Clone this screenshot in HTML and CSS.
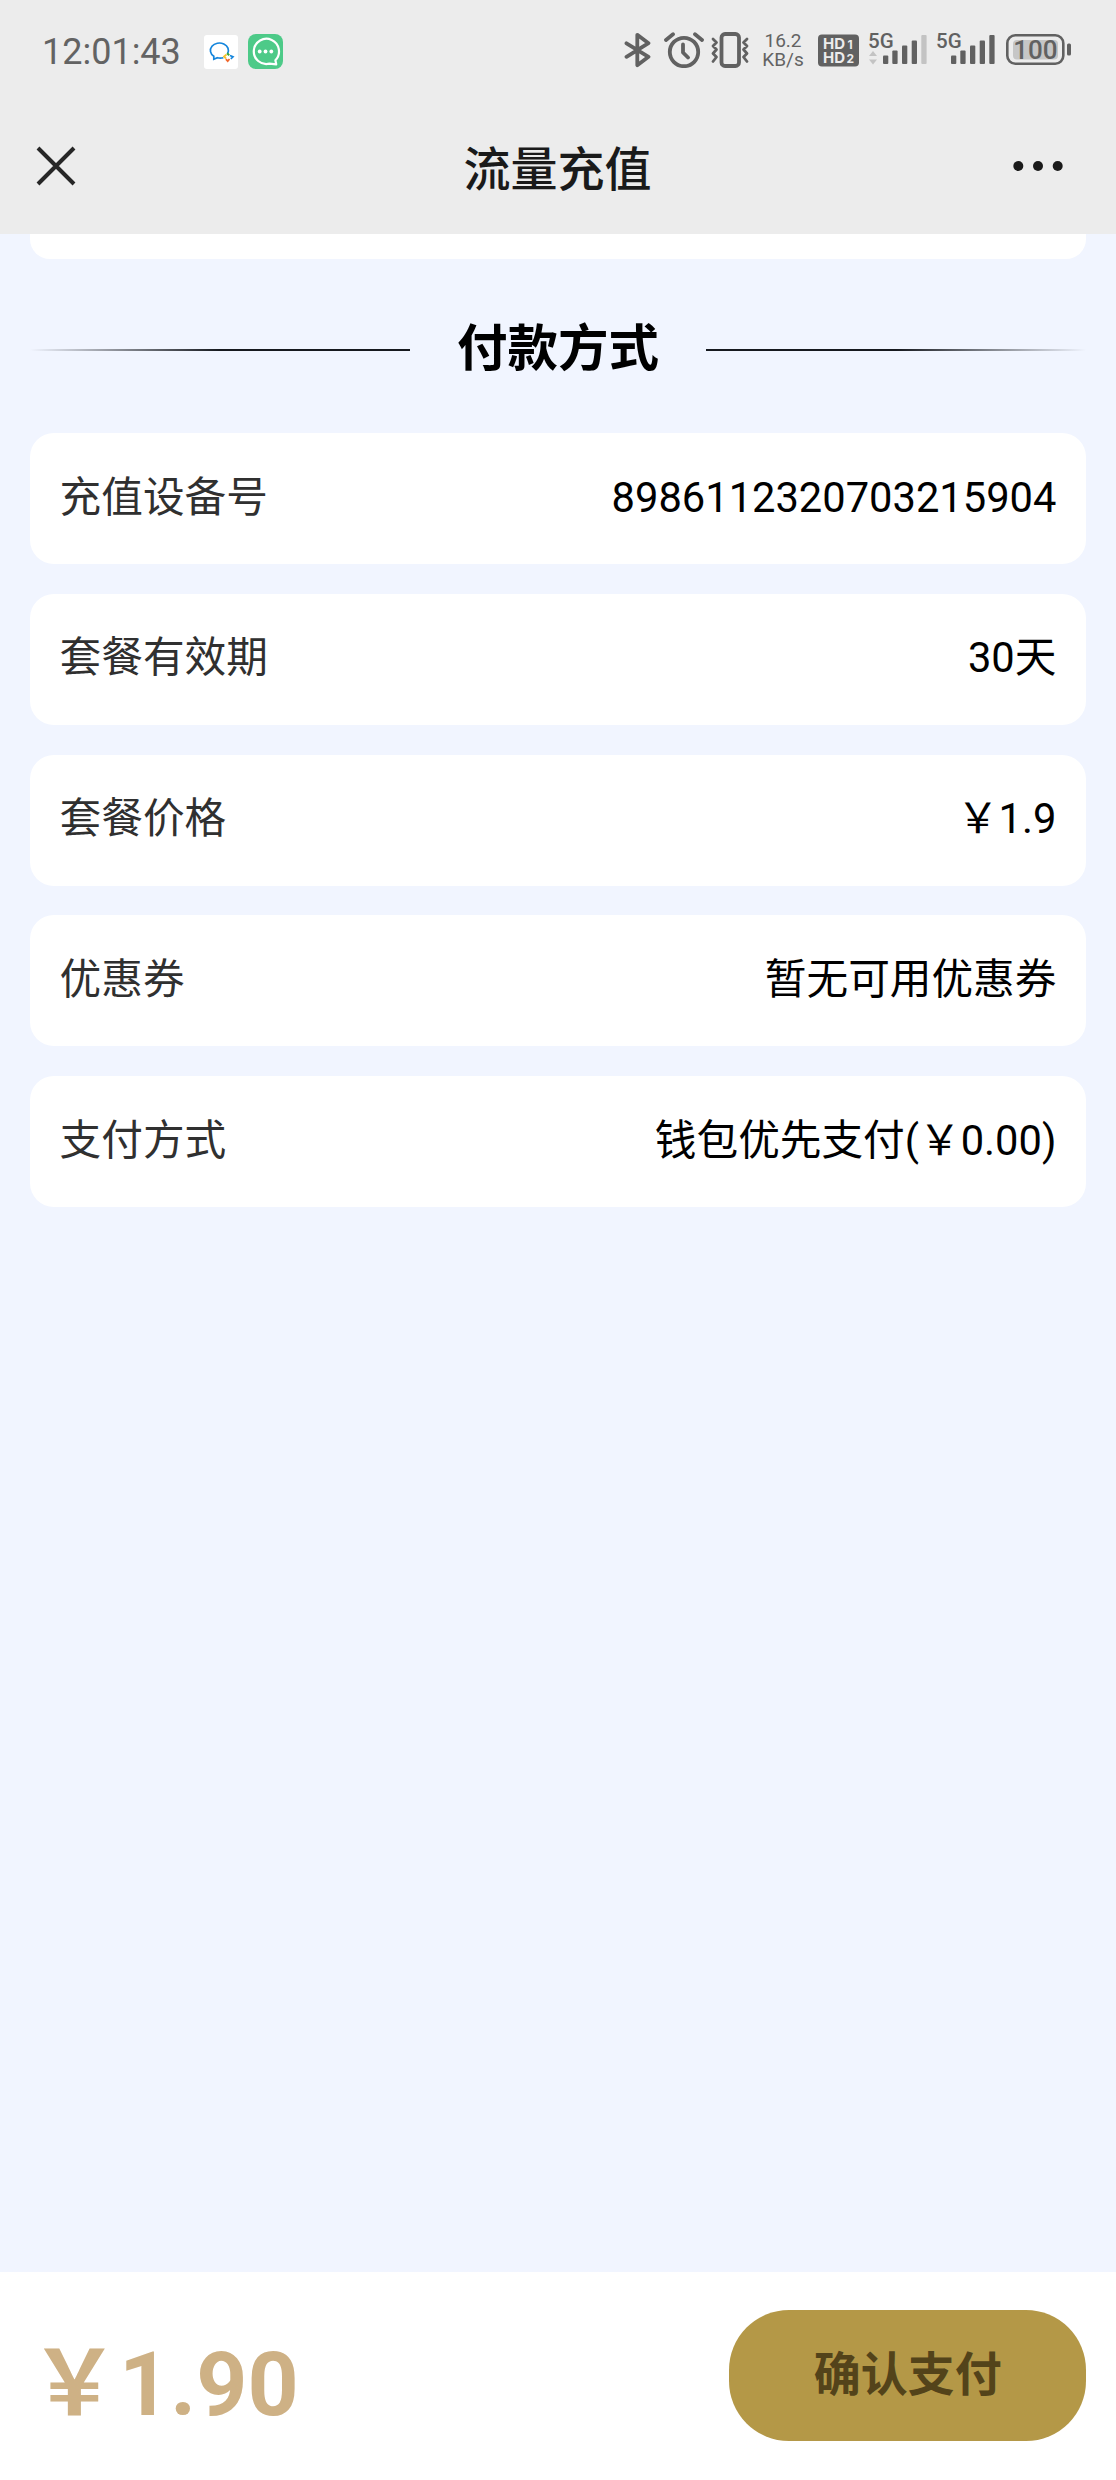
FILE: index.html
```html
<!DOCTYPE html>
<html lang="zh-CN">
  <head>
    <meta charset="UTF-8" />
    <meta name="viewport" content="width=device-width, initial-scale=1.0" />
    <title>流量充值</title>
    <link rel="stylesheet" href="styles.css" />
  </head>
  <body>
    <header class="header">
      <div class="status">
        <span class="status__time">12:01:43</span>
        <svg class="icon-work" width="34" height="34" viewBox="0 0 34 34">
          <rect width="34" height="34" rx="3" fill="#fff" />
          <path d="M23.6 18.5a9 7.4 0 1 0-13.8 2.7v3l3.6-1.5a9 7 0 0 0 6 0" fill="none" stroke="#1485dc" stroke-width="1.7" />
          <path d="M23 18.3l2.2 2" stroke="#3aa63a" stroke-width="2" />
          <path d="M26 20.4l3 1.4-2.2 2" fill="none" stroke="#1485dc" stroke-width="1.7" />
          <path d="M25.5 24l-1.8 2.2-1.8-2" fill="none" stroke="#f0662b" stroke-width="1.8" />
          <path d="M22 23.5l-2-2 2.5-2" fill="none" stroke="#f8c32c" stroke-width="1.8" />
        </svg>
        <svg class="icon-chat" width="35" height="35" viewBox="0 0 35 35">
          <rect width="35" height="35" rx="8" fill="#4dca88" />
          <path d="M27.4 26.2A12.6 12.6 0 1 0 21.5 29.6L28.2 30.3z" fill="none" stroke="#fff" stroke-width="2.2" stroke-linejoin="round" />
          <g fill="#fff">
            <circle cx="11.7" cy="17.5" r="1.9" />
            <circle cx="17.5" cy="17.5" r="1.9" />
            <circle cx="23.3" cy="17.5" r="1.9" />
          </g>
        </svg>

        <div class="status__right">
          <svg class="icon-bluetooth" width="28" height="36" viewBox="0 0 28 36">
            <path d="M2.5 11.3L24.5 24.8 13.3 33.2V2.8L24.5 11.2 2.5 24.8" />
          </svg>
          <svg class="icon-alarm" width="40" height="36" viewBox="0 0 40 36">
            <circle cx="20" cy="20" r="14.2" />
            <path d="M19 12.5v8l5 5M2 8l7-5.7M38 8l-7-5.7" />
          </svg>
          <svg class="icon-vibrate" width="38" height="36" viewBox="0 0 38 36">
            <rect x="10.5" y="2" width="17.5" height="32" rx="3.5" />
            <path d="M2 7l3.5 3.5L2 14l3.5 3.5L2 21.5 5.5 25 2 29.5M36 7l-3.5 3.5L36 14l-3.5 3.5 3.5 4-3.5 3.5 3.5 4.5" stroke-width="2.8" />
          </svg>
          <div class="status__speed"><span>16.2</span><span>KB/s</span></div>
          <svg class="icon-hd" width="41" height="33" viewBox="0 0 41 33">
            <rect width="41" height="32" y="0.5" rx="4" />
            <text x="5" y="14.7">HD<tspan x="29.5" font-size="12">1</tspan></text>
            <text x="5" y="28.5">HD<tspan x="28.5" font-size="12">2</tspan></text>
          </svg>
          <svg class="icon-signal" width="60" height="36" viewBox="-2 -2 60 36">
            <text x="-1" y="15.5">5G</text>
            <path class="faded" d="M0 24l4-5 4 5zM0 27.5h8l-4 5z" />
            <rect x="14" y="23.5" width="5.3" height="8.5" rx="1" />
            <rect x="23.3" y="18.5" width="5.3" height="13.5" rx="1" />
            <rect x="33" y="13.5" width="5.3" height="18.5" rx="1" />
            <rect x="42.7" y="8.5" width="5.3" height="23.5" rx="1" />
            <rect class="faded" x="52.3" y="3" width="5.3" height="29" rx="1" />
          </svg>
          <svg class="icon-signal" width="60" height="36" viewBox="-2 -2 60 36">
            <text x="-1" y="15.5">5G</text>
            <rect x="14" y="23.5" width="5.3" height="8.5" rx="1" />
            <rect x="23.3" y="18.5" width="5.3" height="13.5" rx="1" />
            <rect x="33" y="13.5" width="5.3" height="18.5" rx="1" />
            <rect x="42.7" y="8.5" width="5.3" height="23.5" rx="1" />
            <rect x="52.3" y="3" width="5.3" height="29" rx="1" />
          </svg>
          <svg class="icon-battery" width="66" height="31" viewBox="0 0 66 31">
            <rect x="1.3" y="1.3" width="56" height="28.4" rx="8" fill="none" stroke="#616161" stroke-width="2.6" />
            <rect x="7" y="6" width="45" height="19.5" rx="4" fill="#c6c6c6" />
            <rect x="61" y="9.5" width="4" height="12" rx="1.5" />
            <text x="29.3" y="25" text-anchor="middle">100</text>
          </svg>
        </div>
      </div>

      <nav class="nav">
        <svg class="nav__close" width="40" height="40" viewBox="0 0 40 40">
          <path d="M2 2l36 36M38 2L2 38" />
        </svg>
        <h1 class="nav__title">流量充值</h1>
        <svg class="nav__more" width="50" height="12" viewBox="0 0 50 12">
          <circle cx="5.3" cy="6" r="5" />
          <circle cx="25" cy="6" r="5" />
          <circle cx="44.7" cy="6" r="5" />
        </svg>
      </nav>
    </header>

    <main class="content">
      <div class="prev-card"></div>
      <div class="section-title">
        <span class="line line--left"></span>
        <h2>付款方式</h2>
        <span class="line line--right"></span>
      </div>

      <ul class="list">
        <li class="item">
          <span class="item__label">充值设备号</span>
          <span class="item__value">8986112320703215904</span>
        </li>
        <li class="item">
          <span class="item__label">套餐有效期</span>
          <span class="item__value">30天</span>
        </li>
        <li class="item">
          <span class="item__label">套餐价格</span>
          <span class="item__value">￥1.9</span>
        </li>
        <li class="item">
          <span class="item__label">优惠券</span>
          <span class="item__value">暂无可用优惠券</span>
        </li>
        <li class="item">
          <span class="item__label">支付方式</span>
          <span class="item__value">钱包优先支付(￥0.00)</span>
        </li>
      </ul>
    </main>

    <footer class="footer">
      <div class="price">￥1.90</div>
      <button class="pay-btn" type="button">确认支付</button>
    </footer>
  </body>
</html>
```

FILE: styles.css
```css
* {
  box-sizing: border-box;
}
body {
  margin: 0;
  height: 2480px;
  display: flex;
  flex-direction: column;
  background-color: #f1f5ff;
  font-family: Roboto, "Noto Sans CJK SC", sans-serif;
  color: #000;
}
svg {
  display: block;
  flex-shrink: 0;
}

/* header */
.header {
  height: 234px;
  flex-shrink: 0;
  background-color: #ececec;
}
.status {
  height: 100px;
  display: flex;
  align-items: flex-start;
  padding: 32px 44px 0 42px;
  color: #636363;
}
.status__time {
  width: 162px;
  padding-top: 1px;
  font-size: 36px;
  line-height: 38px;
}
.icon-work {
  margin-top: 3px;
}
.icon-chat {
  margin: 2px 0 0 10px;
}
.status__right {
  display: flex;
  align-items: flex-start;
  margin-left: auto;
}
.status__right svg {
  fill: #616161;
}
.status__right .icon-bluetooth,
.status__right .icon-alarm,
.status__right .icon-vibrate {
  fill: none;
  stroke: #616161;
  stroke-width: 3.8;
  stroke-linecap: round;
  stroke-linejoin: round;
}
.icon-alarm {
  margin-left: 12px;
}
.icon-vibrate {
  margin-left: 7px;
}
.status__speed {
  display: flex;
  flex-direction: column;
  align-items: center;
  width: 44px;
  margin: -1px 0 0 12px;
  font-size: 19px;
  line-height: 19px;
}
.icon-hd {
  margin: 2px 0 0 13px;
}
.status__right .icon-hd text {
  fill: #ececec;
  font-family: Inter, sans-serif;
  font-size: 15px;
  font-weight: 700;
}
.icon-signal {
  margin: -2px 0 0 8px;
}
.icon-signal text {
  font-size: 20.5px;
  font-weight: 500;
}
.status__right .faded {
  fill: #c3c3c3;
}
.icon-battery {
  margin: 2px 0 0 11px;
}
.icon-battery text {
  font-size: 26px;
  font-weight: 500;
}

.nav {
  display: flex;
  align-items: center;
  justify-content: space-between;
  height: 134px;
  padding: 0 53px 2px 36px;
}
.nav__close {
  stroke: #262626;
  stroke-width: 4;
}
.nav__title {
  margin: 0;
  padding: 8px 0 0 26px;
  font-size: 47px;
  font-weight: 500;
  line-height: 60px;
  color: #1a1a1a;
}
.nav__more {
  fill: #1a1a1a;
}

/* content */
.content {
  flex: 1;
  padding: 0 29.8px;
}
.prev-card {
  height: 25px;
  border-radius: 0 0 20px 20px;
  background-color: #fff;
}
.section-title {
  display: flex;
  align-items: center;
  justify-content: space-between;
  height: 174px;
  padding-top: 8px;
}
.section-title h2 {
  margin: 0;
  padding-bottom: 3px;
  font-size: 50.5px;
  line-height: 60px;
}
.line {
  width: 380px;
  height: 2px;
}
.line--left {
  background: linear-gradient(to right, transparent, #16191f 50%);
}
.line--right {
  background: linear-gradient(to left, transparent, #16191f 50%);
}

.list {
  display: flex;
  flex-direction: column;
  gap: 29.76px;
  margin: 0;
  padding: 0;
  list-style: none;
}
.item {
  display: flex;
  align-items: center;
  justify-content: space-between;
  height: 131px;
  padding: 0 29.8px 2px;
  border-radius: 24px;
  background-color: #fff;
  font-size: 41.66px;
  line-height: 60px;
}
.item__label {
  color: #303030;
}

/* bottom bar */
.footer {
  display: flex;
  align-items: flex-start;
  justify-content: space-between;
  height: 208px;
  padding: 38px 29.8px 0;
  background-color: #fff;
}
.price {
  padding-top: 15px;
  font-size: 89.28px;
  font-weight: 700;
  line-height: 120px;
  color: #ceb185;
}
.pay-btn {
  width: 357px;
  height: 131px;
  padding: 0 0 10px;
  border: none;
  border-radius: 60px;
  background-color: #b49847;
  font-family: inherit;
  font-size: 47px;
  font-weight: 700;
  color: #53431a;
}
```
